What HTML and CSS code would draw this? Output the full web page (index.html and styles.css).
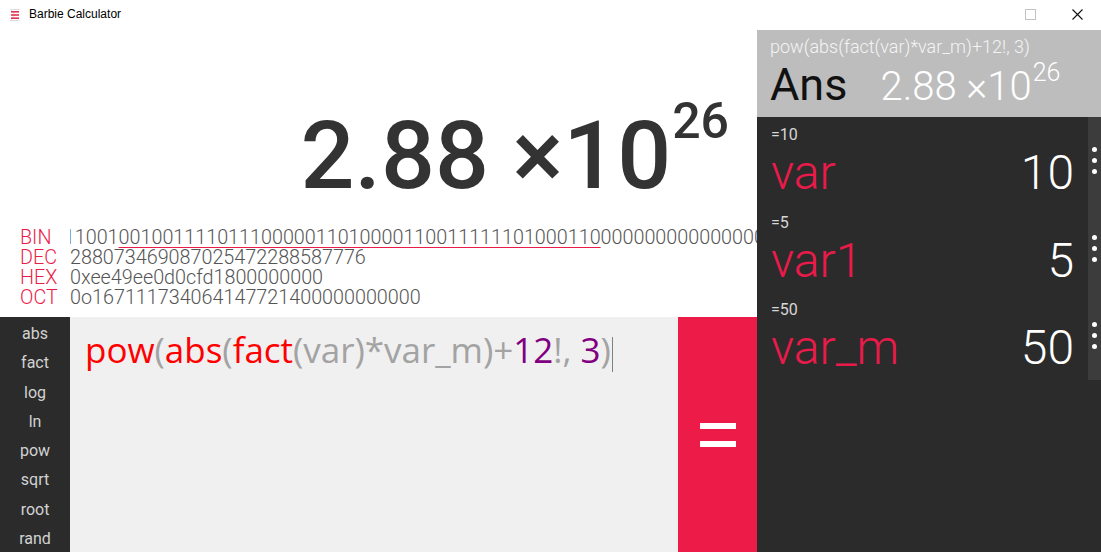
FILE: index.html
```html
<!DOCTYPE html>
<html>
<head>
<meta charset="utf-8">
<title>Barbie Calculator</title>
<link rel="stylesheet" href="styles.css">
</head>
<body>
<div class="window">
  <header class="titlebar">
    <svg class="app-icon" width="12" height="14" viewBox="0 0 12 14">
      <path d="M1.5 1.5 H10.5 M1.5 12.5 H10.5 M1.5 1.5 L6 7 L1.5 12.5" fill="none" stroke="#dcdcdc" stroke-width="1"/>
      <rect x="2" y="3" width="8" height="1.6" fill="#e0334f"/>
      <rect x="2" y="6.2" width="8" height="1.6" fill="#e0334f"/>
      <rect x="2" y="9.4" width="8" height="1.6" fill="#e0334f"/>
    </svg>
    <span class="title">Barbie Calculator</span>
    <div class="controls">
      <svg class="ctl-max" width="11" height="11" viewBox="0 0 11 11"><rect x="0.5" y="0.5" width="10" height="10" fill="none" stroke="#c4c4c4"/></svg>
      <svg class="ctl-close" width="11" height="11" viewBox="0 0 11 11"><path d="M0.5 0.5 L10.5 10.5 M10.5 0.5 L0.5 10.5" stroke="#111" stroke-width="1.1"/></svg>
    </div>
  </header>
  <div class="main">
    <section class="left">
      <div class="display">
        <div class="result">2.88 ×10<span class="exp">26</span></div>
        <div class="bases">
          <div class="base-row">
            <span class="base-label">BIN</span>
            <div class="base-clip"><span class="bin-scroll">1110111001<span class="bin-mark">00100111101110000011010000110011111101000110</span>0000000000000000000000000000000000000000000</span></div>
          </div>
          <div class="base-row">
            <span class="base-label">DEC</span>
            <div class="base-clip">288073469087025472288587776</div>
          </div>
          <div class="base-row">
            <span class="base-label">HEX</span>
            <div class="base-clip">0xee49ee0d0cfd1800000000</div>
          </div>
          <div class="base-row">
            <span class="base-label">OCT</span>
            <div class="base-clip">0o167111734064147721400000000000</div>
          </div>
        </div>
      </div>
      <div class="input-row">
        <nav class="funcs">
          <span class="func">abs</span>
          <span class="func">fact</span>
          <span class="func">log</span>
          <span class="func">ln</span>
          <span class="func">pow</span>
          <span class="func">sqrt</span>
          <span class="func">root</span>
          <span class="func">rand</span>
        </nav>
        <div class="editor">
          <div class="expr"><span class="t-fn">pow</span><span class="t-op">(</span><span class="t-fn">abs</span><span class="t-op">(</span><span class="t-fn">fact</span><span class="t-op">(var)*var_m)+</span><span class="t-num">12</span><span class="t-op">!, </span><span class="t-num">3</span><span class="t-op">)</span><span class="caret"></span></div>
        </div>
        <button class="equals" type="button" aria-label="equals">
          <span class="eq-bar"></span>
          <span class="eq-bar"></span>
        </button>
      </div>
    </section>
    <aside class="right">
      <div class="ans-head">
        <div class="ans-expr">pow(abs(fact(var)*var_m)+12!, 3)</div>
        <div class="ans-row">
          <span class="ans-label">Ans</span>
          <span class="ans-value">2.88 ×10<span class="ans-exp">26</span></span>
        </div>
      </div>
      <div class="vars">
        <div class="var-item">
          <div class="var-body">
            <div class="var-def">=10</div>
            <div class="var-line"><span class="var-name">var</span><span class="var-val">10</span></div>
          </div>
          <div class="var-more"><i></i><i></i><i></i></div>
        </div>
        <div class="var-item">
          <div class="var-body">
            <div class="var-def">=5</div>
            <div class="var-line"><span class="var-name">var1</span><span class="var-val">5</span></div>
          </div>
          <div class="var-more"><i></i><i></i><i></i></div>
        </div>
        <div class="var-item">
          <div class="var-body">
            <div class="var-def">=50</div>
            <div class="var-line"><span class="var-name">var_m</span><span class="var-val">50</span></div>
          </div>
          <div class="var-more"><i></i><i></i><i></i></div>
        </div>
      </div>
    </aside>
  </div>
</div>
</body>
</html>
```
FILE: styles.css
```css
* { box-sizing: border-box; }
html, body { margin: 0; padding: 0; }
body {
  width: 1101px;
  height: 552px;
  overflow: hidden;
  background: #ffffff;
  font-family: Roboto, "Noto Sans", sans-serif;
}
.window { display: flex; flex-direction: column; width: 1101px; height: 552px; }

/* title bar */
.titlebar {
  height: 30px;
  display: flex;
  align-items: center;
  padding-left: 9px;
  background: #ffffff;
}
.app-icon { display: block; margin-right: 8px; margin-top: -1px; }
.title {
  font-family: "Liberation Sans", Arial, sans-serif;
  font-size: 12px;
  color: #000;
  margin-top: -2px;
}
.controls { margin-left: auto; display: flex; align-items: center; height: 30px; }
.ctl-max { display: block; margin-right: 36px; margin-top: -2px; }
.ctl-close { display: block; margin-right: 18px; margin-top: -1px; }

/* main */
.main { display: flex; flex: 1; min-height: 0; }
.left { width: 757px; display: flex; flex-direction: column; }
.display { height: 287px; background: #fff; display: flex; flex-direction: column; }
.result {
  margin-top: 78px;
  align-self: flex-end;
  padding-right: 28px;
  font-family: Roboto, sans-serif;
  font-weight: 500;
  font-size: 95px;
  line-height: 95px;
  height: 95px;
  color: #333333;
  white-space: nowrap;
}
.exp {
  font-size: 50px;
  line-height: 0;
  vertical-align: 50px;
  margin-left: 1px;
}
.bases { margin-top: 25px; display: flex; flex-direction: column; }
.base-row {
  display: flex;
  height: 20px;
  line-height: 20px;
  font-size: 19.75px;
  font-weight: 300;
  white-space: nowrap;
}
.base-label { width: 70px; padding-left: 20px; color: #ec1c48; flex: none; }
.base-clip { flex: 1; overflow: hidden; color: #555555; }
.bin-scroll { display: inline-block; margin-left: -61px; }
.bin-mark {
  text-decoration: underline;
  text-decoration-color: #ec1c48;
  text-decoration-thickness: 2px;
  text-underline-offset: 3px;
}

/* input row */
.input-row { flex: 1; display: flex; min-height: 0; }
.funcs {
  width: 70px;
  background: #2b2b2b;
  display: flex;
  flex-direction: column;
  padding-top: 2px;
}
.func {
  height: 29.3px;
  line-height: 29.3px;
  text-align: center;
  font-size: 16px;
  color: #d2d2d2;
}
.editor { flex: 1; background: #f0f0f0; padding: 11px 0 0 15px; }
.expr {
  font-family: "Open Sans", sans-serif;
  font-size: 35px;
  line-height: 44px;
  white-space: nowrap;
  letter-spacing: -0.02px;
}
.t-fn { color: #ff0000; }
.t-op { color: #a3a3a3; }
.t-num { color: #800080; }
.caret {
  display: inline-block;
  width: 1px;
  height: 35px;
  background: #808080;
  vertical-align: -9px;
  margin-left: 1px;
}
.equals {
  width: 79px;
  border: 0;
  margin: 0;
  padding: 0;
  background: #ed1b47;
  display: flex;
  flex-direction: column;
  align-items: center;
  justify-content: center;
  gap: 12px;
}
.eq-bar { display: block; width: 36px; height: 6px; background: #ffffff; }

/* right panel */
.right { width: 344px; background: #2b2b2b; display: flex; flex-direction: column; }
.ans-head { height: 87px; background: #bdbdbd; padding: 7px 0 0 13px; }
.ans-expr {
  font-size: 18px;
  font-weight: 300;
  line-height: 20px;
  color: #f4f4f4;
  white-space: nowrap;
}
.ans-row { display: flex; align-items: baseline; margin-top: 3px; height: 50px; line-height: 50px; white-space: nowrap; }
.ans-label { font-size: 45px; font-weight: 400; color: #111; }
.ans-value { font-size: 40px; font-weight: 300; color: #ffffff; margin-left: 33px; }
.ans-exp { font-size: 25px; line-height: 0; vertical-align: 19px; margin-left: 1px; }

.vars { display: flex; flex-direction: column; }
.var-item { height: 87.5px; display: flex; }
.var-body { flex: 1; padding: 9px 14px 0 14px; }
.var-def { font-size: 16px; line-height: 17px; color: #d6d6d6; }
.var-line {
  display: flex;
  justify-content: space-between;
  margin-top: 6px;
  height: 48px;
  line-height: 48px;
  font-size: 48px;
  font-weight: 300;
}
.var-name { color: #ea1a4a; }
.var-val { color: #ffffff; }
.var-more {
  width: 13px;
  background: #3c3c3c;
  display: flex;
  flex-direction: column;
  align-items: center;
  justify-content: center;
  gap: 6px;
}
.var-more i { display: block; width: 5px; height: 5px; border-radius: 50%; background: #ffffff; }
```
